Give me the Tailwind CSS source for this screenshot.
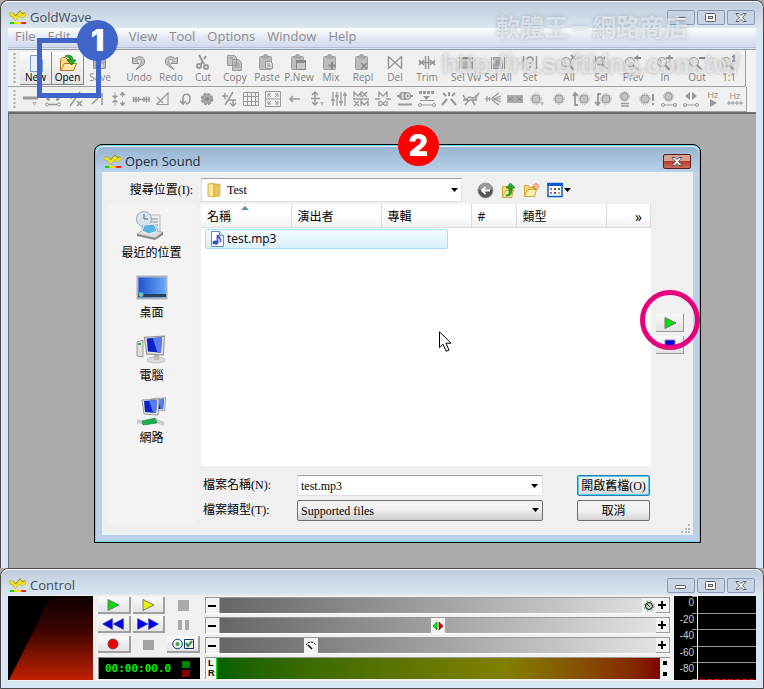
<!DOCTYPE html>
<html lang="zh-Hant">
<head>
<meta charset="utf-8">
<title>GoldWave</title>
<script src="https://cdn.jsdelivr.net/npm/@tailwindcss/browser@4"></script>
</head>
<body class="font-['Open_Sans','Noto_Sans_CJK_TC',sans-serif] text-xs">
<svg class="hidden" aria-hidden="true">
  <symbol id="logo" viewBox="0 0 17 15"><path d="M.500 4.500h3l3 3.500 4.500-5 2.500 3 3-2.500" fill="none" stroke="#9a8c20" stroke-width="3.600"/><path d="M.500 4.500h3l3 4 4.500-5 2.500 3 3-2.500" fill="none" stroke="#f2e21c" stroke-width="2.600"/><path d="M1 13h5" stroke="#0d0" stroke-width="2"/><path d="M5 13h8" stroke="#fd0" stroke-width="2"/><path d="M12 13h5" stroke="#e22" stroke-width="2"/></symbol>
  <symbol id="mag" viewBox="0 0 18 16"><circle cx="6" cy="7" r="4.500" fill="#eee" stroke="#999"/><path d="M9 10l5 5M4 6l1-1" stroke="#999" stroke-width="2"/></symbol>
  <symbol id="clip" viewBox="0 0 16 16"><rect x="1.500" y="2.500" width="12" height="13" rx="1" fill="#bdbdbd" stroke="#a0a0a0"/><path d="M4 2h2V.5h3V2h2v2H4z" fill="#aaa" stroke="#999" stroke-width=".6"/></symbol>
  <symbol id="knob" viewBox="0 0 12 12"><circle cx="6" cy="6" r="4" fill="#c4c4c4" stroke="#999" stroke-width="1.200"/><circle cx="6" cy="6" r="5.400" fill="none" stroke="#999" stroke-dasharray="1 1.400"/></symbol>
  <symbol id="min" viewBox="0 0 26 13"><rect x="7.500" y="6.500" width="10" height="3" rx="1" fill="#fff" stroke="#555a6c"/></symbol>
  <symbol id="max" viewBox="0 0 26 13"><rect x="7.500" y="2.500" width="10" height="8" rx="1" fill="#fff" stroke="#555a6c"/><rect x="10.500" y="5.500" width="4" height="2" fill="#cfdbe8" stroke="#555a6c"/></symbol>
  <symbol id="close" viewBox="0 0 26 13"><path d="M8 2.500h3l2 2 2-2h3l-3.500 4 3.500 4h-3l-2-2-2 2H8l3.500-4z" fill="#fff" stroke="#555a6c"/></symbol>
  <symbol id="down" viewBox="0 0 7 4"><path d="M0 0h7L3.500 4z" fill="#000"/></symbol>
  <symbol id="pc" viewBox="0 0 22 22"><path d="M2 2l17-1-1 16-14-1z" fill="#e4e4e4" stroke="#999"/><path d="M4 3l13-1-1 13-11-1z" fill="#0824c8"/><path d="M9 2.600l4 12 3 .4 1-13z" fill="#5a7cec"/></symbol>
</svg>

<div class="relative flex min-h-screen flex-col overflow-hidden bg-[#ababab]">

  <!-- Main window -->
  <main class="flex flex-1 flex-col rounded-t-lg border border-b-0 border-[#4c4a4e] bg-[#d9e6f3] px-[7px]">
    <header class="-mx-[7px] flex h-[27px] items-start rounded-t-lg border-t border-white/70 bg-linear-to-b from-[#bfccda] to-[#dbe6f2] px-2">
      <svg class="mt-2 h-4 w-[21px]"><use href="#logo" width="17" height="15"/></svg>
      <h1 class="mt-[5px] flex-1 text-[13px] leading-5 text-[#454c58]">GoldWave</h1>
      <div class="mt-2 flex gap-0.5 *:h-[15px] *:w-7 *:rounded-xs *:border *:border-[#8c9ab0] *:bg-[#c8d4e4]">
        <button aria-label="Minimize"><svg class="size-full"><use href="#min"/></svg></button>
        <button aria-label="Maximize"><svg class="size-full"><use href="#max"/></svg></button>
        <button aria-label="Close"><svg class="size-full"><use href="#close"/></svg></button>
      </div>
    </header>
    <nav class="flex h-5 items-start gap-3 border-b border-[#b8bcd0] bg-linear-to-b from-white via-[#e4e8f4] to-[#d3d9ee] pl-[7px] text-[13px] leading-4 text-[#8c8c8c] *:whitespace-nowrap">
      <button>File</button><button>Edit</button><button>Effect</button><button>View</button><button>Tool</button><button>Options</button><button>Window</button><button>Help</button>
    </nav>

    <!-- Command toolbar -->
    <div class="mt-px border-t border-[#999] bg-[#f3f3f3]">
      <div class="flex h-[37px] w-[738px] items-center gap-[7px] overflow-hidden border-r border-b border-[#a0a0a0] bg-[#f0f0f0] pl-[5px]">
        <svg class="-mr-[7px] h-8 w-[7px] shrink-0"><path d="M1.500 1v30" stroke="#aaa" stroke-width="2" stroke-dasharray="2 2"/></svg>
        <div class="flex text-[10px] leading-[10px] text-black *:flex *:h-[33px] *:w-8 *:flex-col *:items-center *:pt-0.5 *:whitespace-nowrap">
          <button class="border-r border-b border-[#888] bg-linear-to-b from-[#fafafa] to-[#e2e2e2]"><svg class="size-[18px] shrink-0"><path d="M3.500 1.500h8l4 4v12h-12z" fill="#e6efff" stroke="#7f9fd2"/><path d="M11.500 1.500v4h4" fill="#fff" stroke="#7f9fd2"/></svg>New</button>
          <button class="border-r border-b border-[#888] bg-linear-to-b from-[#fafafa] to-[#e2e2e2]"><svg class="size-[18px] shrink-0"><path d="M1.500 16.500v-11l2-2h3l2 2h5v3" fill="#fbd98a" stroke="#b5791e"/><path d="M1.500 16.500l4-7h12l-3 7z" fill="#ffe9a8" stroke="#b5791e"/><path d="M6 2c5-2 8 0 8 4h3l-4.500 5L8 6h3c0-2-2-3-5-4z" fill="#23b023" stroke="#0a6e0a" stroke-width=".7"/></svg>Open</button>
          <button class="text-[#888]"><svg class="size-[18px] shrink-0"><path d="M2.500 2.500h12v12h-12z" fill="#b0b0b0" stroke="#999"/><path d="M5 3h7v4H5zM5 10h7v4H5z" fill="#ddd"/></svg>Save</button>
        </div>
        <div class="flex text-[10px] leading-[10px] text-[#808080] *:flex *:h-[33px] *:w-8 *:flex-col *:items-center *:pt-0.5 *:whitespace-nowrap">
          <button><svg class="size-[18px] shrink-0"><path d="M2.500 3v6.500H9L6.500 7C9 4 13 6 10.500 10L6 15.500 13 11c5-5-2-12-8.500-6z" fill="#c4c4c4" stroke="#8c8c8c"/></svg>Undo</button>
          <button><svg class="size-[18px] shrink-0"><path d="M15.500 3v6.500H9L11.500 7C9 4 5 6 7.500 10l4.500 5.500L5 11C0 6 7-1 13.500 5z" fill="#c4c4c4" stroke="#8c8c8c"/></svg>Redo</button>
          <button><svg class="size-[18px] shrink-0" fill="none" stroke="#999" stroke-width="2"><path d="M5 1l5 9M10 5l2-3M9 7L6 11"/><circle cx="5" cy="12" r="2"/><circle cx="12" cy="13" r="2"/></svg>Cut</button>
          <button><svg class="size-[18px] shrink-0" fill="#c2c2c2" stroke="#999"><path d="M1.500 1.500h7l2 2v8h-9zM6.500 5.500h6l3 3v8h-9z"/><path d="M8 9h5M8 11h6M8 13h6M3 4h4"/></svg>Copy</button>
          <button><svg class="size-[18px] shrink-0"><use href="#clip" width="16" height="16"/><path d="M7.500 7.500h5l2 2v5h-7z" fill="#ddd" stroke="#999"/><path d="M9 10h3M9 12h4" stroke="#999"/></svg>Paste</button>
          <button><svg class="size-[18px] shrink-0"><use href="#clip" width="16" height="16"/><path d="M6.500 6.500h9v9h-9z" fill="#c8c8c8" stroke="#888"/><path d="M6 7.500h10" stroke="#888" stroke-width="3"/></svg>P.New</button>
          <button><svg class="size-[18px] shrink-0"><use href="#clip" width="16" height="16"/><path d="M10 8v7M6.500 11.500h7" stroke="#888" stroke-width="2"/></svg>Mix</button>
          <button><svg class="size-[18px] shrink-0"><use href="#clip" width="16" height="16"/><path d="M7 9l6 6M13 9l-6 6" stroke="#888" stroke-width="1.600"/></svg>Repl</button>
          <button><svg class="size-[18px] shrink-0" fill="none" stroke="#999" stroke-width="1.500"><path d="M2.500 2v13M15.500 2v13M3 3l12 11M15 3L3 14"/></svg>Del</button>
          <button><svg class="size-[18px] shrink-0" fill="none" stroke="#999" stroke-width="1.500"><path d="M7.500 2v13M10.500 2v13M1 6l5 5M6 6l-5 5M12 6l5 5M17 6l-5 5M1 8.500h16"/></svg>Trim</button>
        </div>
        <div class="flex text-[10px] leading-[10px] text-[#808080] *:flex *:h-[33px] *:w-8 *:flex-col *:items-center *:pt-0.5 *:whitespace-nowrap">
          <button><svg class="size-[18px] shrink-0"><path d="M2.500 3v12M15.500 3v12" stroke="#999"/><path d="M4 4h10v10H4z" fill="#bbb" stroke="#999"/><path d="M4 4.500h10" stroke="#777" stroke-width="2"/></svg>Sel Vw</button>
          <button><svg class="size-[18px] shrink-0"><path d="M2.500 3v12M15.500 3v12" stroke="#999"/><path d="M4.500 3.500h6l3 3v8h-9z" fill="#bbb" stroke="#999"/><path d="M6 7h5M6 9h6M6 11h6" stroke="#888"/></svg>Sel All</button>
          <button><svg class="size-[18px] shrink-0" fill="none" stroke="#999" stroke-width="1.500"><path d="M2.500 2v13M15.500 2v13M6 6c0-4 6-4 6 0 0 2-3 2-3 4M9 12v2"/></svg>Set</button>
        </div>
        <div class="flex text-[10px] leading-[10px] text-[#808080] *:flex *:h-[33px] *:w-8 *:flex-col *:items-center *:pt-0.5 *:whitespace-nowrap">
          <button><svg class="size-[18px] shrink-0"><use href="#mag"/><path d="M11 1l5 5M16 1l-5 5" stroke="#888" stroke-width="1.500"/></svg>All</button>
          <button><svg class="size-[18px] shrink-0"><path d="M3.500 2v12M12.500 2v12" stroke="#999"/><rect x="5" y="3" width="6" height="8" rx="2" fill="#ddd" stroke="#999"/><path d="M10 10l5 5" stroke="#999" stroke-width="2"/></svg>Sel</button>
          <button><svg class="size-[18px] shrink-0"><use href="#mag"/><path d="M17 4h-5" stroke="#888" stroke-width="2"/><path d="M10 4l4-3v6z" fill="#888"/></svg>Prev</button>
          <button><svg class="size-[18px] shrink-0"><use href="#mag"/><path d="M10 4h7M13.500 1v7" stroke="#999" stroke-width="2"/></svg>In</button>
          <button><svg class="size-[18px] shrink-0"><use href="#mag"/><path d="M11 4h6" stroke="#888" stroke-width="2"/></svg>Out</button>
          <button><svg class="size-[18px] shrink-0"><use href="#mag"/><path d="M12 3l2-1.500V7M12 7h4" fill="none" stroke="#888" stroke-width="1.300"/></svg>1:1</button>
        </div>
      </div>

      <!-- Effects toolbar -->
      <div class="flex h-[25px] w-[739px] items-center overflow-hidden border-r border-b border-[#a0a0a0] bg-[#f0f0f0] pl-[5px] *:shrink-0">
        <svg class="h-5 w-[7px]"><path d="M1.500 1v18" stroke="#aaa" stroke-width="2" stroke-dasharray="2 2"/></svg>
        <div class="flex text-[#999] *:flex *:h-5 *:w-[22px] *:items-center *:justify-center">
          <button aria-label="Censor"><svg width="16" height="16" fill="none" stroke="currentColor"><path d="M0 7h15" stroke-width="3"/><path d="M9 11h5l-2.500 4z" fill="#bbb" stroke="none"/></svg></button>
          <button aria-label="Stereo"><svg width="16" height="16" fill="none" stroke="currentColor"><path d="M1 13.500h14M4 2v8M12 2v8M1 6h14M2 4l-1 2 2 3M14 4l1 2-2 3" stroke-width="1.500"/><circle cx="2" cy="13.500" r="1.500" fill="#f0f0f0"/><circle cx="14" cy="13.500" r="1.500" fill="#f0f0f0"/></svg></button>
          <button aria-label="Expression"><svg width="16" height="16" fill="none" stroke="currentColor" stroke-width="1.500"><path d="M1 5h6M4 2v6M13 1L3 15M10 10l5 5M15 10l-5 5M10 4h5"/></svg></button>
          <button aria-label="Fade"><svg width="16" height="16" fill="none" stroke="currentColor" stroke-width="1.500"><path d="M3 13L13 3v11M8 3h5M3 4l4 3"/></svg></button>
          <button aria-label="Compressor"><svg width="16" height="16" fill="#999" stroke="currentColor"><path d="M4 1v5M4 10v5M11.500 1v5M11.500 10v5M1.500 5h5L4 7.500zM1.500 11h5L4 8.500zM9 4h5l-2.500-3zM9 12h5l-2.500 3z" stroke-width=".8"/></svg></button>
          <button aria-label="Delay"><svg width="18" height="16"><path d="M1.500 6v5M4 5.500v6M6.500 6v5M12 6v5M14.500 5.500v6M17 6v5M1 8.500h16" stroke="currentColor" stroke-width="1.500"/></svg></button>
          <button aria-label="Doppler"><svg width="16" height="16" fill="none" stroke="currentColor" stroke-width="1.200"><path d="M2 13L13 2v11.500H2zM2 6l6 6"/></svg></button>
          <button aria-label="Echo"><svg width="16" height="16" fill="none" stroke="currentColor" stroke-width="1.600"><path d="M6 13V7c0-5 7-5 7 0 0 4-1 5-4 6M3 10l3 3 3-3"/></svg></button>
          <button aria-label="Filter"><svg width="16" height="16"><circle cx="8" cy="8" r="5" fill="#a8a8a8" stroke="#999" stroke-width="2.500" stroke-dasharray="2.800 1.100"/><circle cx="8" cy="8" r="2" fill="#888"/></svg></button>
          <button aria-label="Dynamics"><svg width="16" height="16" fill="none" stroke="currentColor" stroke-width="1.500"><path d="M1 5h6M4 2v6M12 1L4 14M7 9h8M9 12l3 3 3-3M12 9v5"/></svg></button>
          <button aria-label="Grid"><svg width="18" height="16" fill="none" stroke="currentColor"><path d="M1.500 1.500h15v13h-15zM1 5.500h16M1 10.500h16M5.500 2v13M9.500 2v13M13.500 2v13"/></svg></button>
          <button aria-label="Flanger"><svg width="16" height="16" fill="none" stroke="currentColor"><path d="M.5.500h15v15H.5zM3 6V3h3M10 3h3v3M13 10v3h-3M6 13H3v-3M3 3l3 3M13 3l-3 3M3 13l3-3M13 13l-3-3M1 8h14"/></svg></button>
          <button aria-label="Reverse"><svg width="14" height="16" fill="none" stroke="currentColor" stroke-width="1.600"><path d="M2 8h10M5 5L2 8l3 3"/></svg></button>
          <button aria-label="Invert"><svg width="16" height="16" fill="none" stroke="currentColor" stroke-width="1.500"><path d="M6 1v13M3 4l3-3 3 3M3 11l3 3 3-3M2 7.500h9"/><path d="M11 11h4l-2 4z" fill="#bbb" stroke="none"/></svg></button>
          <button aria-label="Equalizer"><svg width="16" height="16" fill="none" stroke="currentColor" stroke-width="1.300"><path d="M2 1v14M6 1v14M10 1v14M14 1v14M0 9h4M4 5h4M8 11h4M12 4h4"/></svg></button>
          <button aria-label="Match volume"><svg width="16" height="16" fill="none" stroke="currentColor" stroke-width="1.300"><path d="M1 6V1l4 4 3-4v5M9 1l5 5M14 1L9 6M0 8h16M1 10l5 5M6 10l-5 5M8 15v-5l3 4 4-4v5"/></svg></button>
          <button aria-label="Maximize volume"><svg width="16" height="16" fill="none" stroke="currentColor" stroke-width="1.300"><path d="M4 6V1l4 4 4-4v5M0 8h5M11 8h5M5 10l6 5M11 10l-6 5M4 10v5M12 10v5"/></svg></button>
          <button aria-label="EQ"><svg width="18" height="16"><rect x="3" y="1" width="12" height="8" rx="4" fill="currentColor"/><path d="M1 5h3M14 5h3M2 13.500h14" stroke="#999" stroke-width="2"/><path d="M8 3H6v4h2M6 5h2M10 3h3v4h-3z" fill="none" stroke="#eee"/></svg></button>
          <button aria-label="Shape volume"><svg width="18" height="16"><path d="M1 1.500h16" stroke="#999" stroke-width="3" stroke-dasharray="3 1"/><path d="M5 5h7L8.500 9z" fill="#999"/><path d="M2 9.500h14M2 14h14" stroke="#999"/><circle cx="2" cy="14" r="1.500" fill="#eee" stroke="#999"/><circle cx="16" cy="14" r="1.500" fill="#eee" stroke="#999"/></svg></button>
          <button aria-label="Pop and click"><svg width="16" height="16" stroke="currentColor" stroke-width="2"><path d="M6 8l-5 6M10 8l5 6M8 5V1M5 5L2 2M11 5l3-3"/></svg></button>
          <button aria-label="Noise reduction"><svg width="18" height="16" stroke="currentColor" stroke-width="1.500" fill="none"><path d="M1 4l3 5 3-3 4 1 3-1 3-4M1 9h5M14 4v6M3 14l4-5M13 14l-3-5M7 9h8"/></svg></button>
          <button aria-label="Silence"><svg width="18" height="16" stroke="currentColor" stroke-width="1.200"><path d="M1 8h16M8 7l7-5M8 9l7 5M9 8l8-3M9 8l8 3M3 5v6M5.500 6v4"/></svg></button>
          <button aria-label="Smoother"><svg width="18" height="16"><path d="M1 4h16v8H1z" fill="#aaa"/><path d="M2 6l5 4M7 6l-5 4M11 6l5 4M16 6l-5 4" stroke="#888"/></svg></button>
          <button aria-label="Volume menu"><svg width="16" height="16"><use href="#knob" x="1" y="2" width="12" height="12"/><path d="M11 11h4l-2 4z" fill="#bbb"/></svg></button>
          <button aria-label="Volume"><svg width="16" height="16"><use href="#knob" x="2" y="2" width="12" height="12"/></svg></button>
          <button aria-label="Fade in"><svg width="18" height="16"><use href="#knob" x="6" y="2" width="12" height="12"/><path d="M6 14H3V3M1 5l2-3 3 3" stroke="#999" stroke-width="1.800" fill="none"/></svg></button>
          <button aria-label="Fade out"><svg width="18" height="16"><use href="#knob" x="6" y="2" width="12" height="12"/><path d="M7 3H4v11M1 11l3 3 2-3" stroke="#999" stroke-width="1.800" fill="none"/></svg></button>
          <button aria-label="Match"><svg width="16" height="16"><use href="#knob" x="2" y="0" width="11" height="11"/><path d="M4 12.500h8M4 15h8" stroke="#999" stroke-width="1.500"/></svg></button>
          <button aria-label="Boost"><svg width="18" height="16"><use href="#knob" x="1" y="2" width="12" height="12"/><path d="M15 3v7M15 12v2" stroke="#999" stroke-width="2"/></svg></button>
          <button aria-label="Envelope"><svg width="18" height="16"><use href="#knob" x="3" y="0" width="11" height="11"/><path d="M3 14h12" stroke="#999"/><circle cx="3" cy="14" r="1.500" fill="#eee" stroke="#999"/><circle cx="15" cy="14" r="1.500" fill="#eee" stroke="#999"/></svg></button>
          <button aria-label="Pan"><svg width="18" height="16"><path d="M8 1v8L3 5zM10 1v8l5-4z" fill="#999"/><path d="M3 14h12" stroke="#999"/><circle cx="3" cy="14" r="1.500" fill="#eee" stroke="#999"/><circle cx="15" cy="14" r="1.500" fill="#eee" stroke="#999"/></svg></button>
          <button aria-label="Playback rate" class="flex-col font-['Liberation_Sans',sans-serif] text-[9px] leading-2">Hz<svg width="10" height="8"><path d="M2 0v8l7-4z" fill="#999"/></svg></button>
          <button aria-label="Resample" class="flex-col font-['Liberation_Sans',sans-serif] text-[9px] leading-2">Hz<svg width="16" height="6"><path d="M0 3h16M2 1v4M6 1v4M10 1v4M14 1v4" stroke="#999"/></svg></button>
        </div>
      </div>
    </div>
    <div class="flex-1 border-t-2 border-l border-[#6c6c6c] bg-[#ababab]"></div>
  </main>

  <!-- Control window -->
  <section class="rounded-t-lg border border-[#4c4a4e] bg-[#d9e6f3] px-[7px] pb-[7px]">
    <header class="-mx-[7px] flex h-[26px] items-start rounded-t-lg border-t border-white/70 bg-linear-to-b from-[#bfccda] to-[#dbe6f2] px-2">
      <svg class="mt-2 h-4 w-[21px]"><use href="#logo" width="17" height="15"/></svg>
      <h2 class="mt-[5px] flex-1 text-[13px] leading-5 text-[#454c58]">Control</h2>
      <div class="mt-2 flex gap-0.5 *:h-[15px] *:w-7 *:rounded-xs *:border *:border-[#8c9ab0] *:bg-[#c8d4e4]">
        <button aria-label="Minimize"><svg class="size-full"><use href="#min"/></svg></button>
        <button aria-label="Maximize"><svg class="size-full"><use href="#max"/></svg></button>
        <button aria-label="Close"><svg class="size-full"><use href="#close"/></svg></button>
      </div>
    </header>
    <div class="flex h-[86px] bg-[#f0f0f0]">
      <svg class="mt-px h-[84px] w-[85px] shrink-0" viewBox="0 0 85 84"><defs><linearGradient id="heat" x2="0" y2="1"><stop offset="0" stop-color="#100000"/><stop offset=".4" stop-color="#3a0500"/><stop offset="1" stop-color="#c02000"/></linearGradient></defs><path d="M0 0h85v84H0z"/><path d="M43 0h42v84H1z" fill="url(#heat)"/></svg>
      <div class="ml-[5px] w-[102px] shrink-0 pt-0.5">
        <div class="grid grid-cols-3 gap-x-0.5 gap-y-0.5 *:flex *:h-[17px] *:items-center *:justify-center">
          <button aria-label="Play" class="border-r-2 border-b-2 border-[#a0a0a0] bg-linear-to-b from-[#fafafa] to-[#e4e4e4]"><svg width="14" height="12"><path d="M2 .5v11L13 6z" fill="#0d0" stroke="#777"/></svg></button>
          <button aria-label="Play selection" class="border-r-2 border-b-2 border-[#a0a0a0] bg-linear-to-b from-[#fafafa] to-[#e4e4e4]"><svg width="14" height="12"><path d="M2 .5v11L13 6z" fill="#ee0" stroke="#777"/></svg></button>
          <button aria-label="Stop"><svg width="12" height="12"><path d="M0 0h11v11H0z" fill="#aaa"/></svg></button>
          <button aria-label="Rewind" class="border-r-2 border-b-2 border-[#a0a0a0] bg-linear-to-b from-[#fafafa] to-[#e4e4e4]"><svg width="22" height="12"><path d="M10.500.5v11L.5 6zM21.500.5v11L11 6z" fill="#00e" stroke="#559" stroke-width=".6"/></svg></button>
          <button aria-label="Fast forward" class="border-r-2 border-b-2 border-[#a0a0a0] bg-linear-to-b from-[#fafafa] to-[#e4e4e4]"><svg width="22" height="12"><path d="M.5.5v11L11 6zM11.500.5v11L21.500 6z" fill="#00e" stroke="#559" stroke-width=".6"/></svg></button>
          <button aria-label="Pause"><svg width="12" height="12"><path d="M0 1h4v10H0zM7 1h4v10H7z" fill="#aaa"/></svg></button>
        </div>
        <div class="mt-[3px] grid grid-cols-3 gap-x-0.5 *:flex *:h-[17px] *:items-center *:justify-center">
          <button aria-label="Record" class="border-r-2 border-b-2 border-[#a0a0a0] bg-linear-to-b from-[#fafafa] to-[#e4e4e4]"><svg width="12" height="12"><circle cx="6" cy="6" r="5" fill="#e00" stroke="#844"/></svg></button>
          <button aria-label="Stop recording"><svg width="12" height="12"><path d="M0 1h11v10H0z" fill="#a4a4a4"/></svg></button>
          <button aria-label="Properties" class="border-r-2 border-b-2 border-[#a0a0a0] bg-linear-to-b from-[#fafafa] to-[#e4e4e4]"><svg width="22" height="12" fill="none" stroke="#137"><circle cx="5.500" cy="6" r="4.800"/><circle cx="5.500" cy="6" r="1.500" fill="#2a3" stroke="#2a3"/><path d="M12.500 1.500h9v9h-9z"/><path d="M14 5l2 3 4-5" stroke="#283" stroke-width="2"/></svg></button>
        </div>
        <div class="mt-1 flex h-[22px] items-center justify-between border-t border-l border-[#888] bg-black pr-2.5 pl-1.5 font-['DejaVu_Sans_Mono',monospace] text-[11px] leading-5 font-bold text-[#00f000]">
          <output>00:00:00.0</output>
          <svg class="shrink-0" width="8" height="16"><path d="M0 0h8v7H0z" fill="#008000"/><path d="M0 9h8v7H0z" fill="#800000"/></svg>
        </div>
      </div>
      <div class="ml-[5px] flex min-w-0 flex-1 flex-col gap-[3px] pt-0.5">
        <div class="flex h-[17px] items-center border-t border-b border-l border-[#999] border-b-white bg-[#f0f0f0]">
          <button aria-label="Volume down" class="h-full w-3.5 border-r border-[#aaa] bg-[#f2f2f2]"><svg width="12" height="14"><path d="M2 7h8" stroke="#000" stroke-width="2"/></svg></button>
          <div class="flex h-full flex-1 justify-end bg-linear-to-r from-[#666] to-[#e2e2e2]"><button aria-label="Volume" class="w-3.5 bg-[#f2f2f2]"><svg width="14" height="14"><circle cx="7" cy="7" r="5" fill="none" stroke="#2b2" stroke-dasharray="2 2"/><circle cx="7" cy="7" r="3.500" fill="#ccc" stroke="#000"/><path d="M5 5l3 3" stroke="#000"/></svg></button></div>
          <button aria-label="Volume up" class="h-full w-3.5 border-r border-b border-[#999] bg-[#f2f2f2]"><svg width="12" height="14"><path d="M2 7h8M6 3v8" stroke="#000" stroke-width="2"/></svg></button>
        </div>
        <div class="flex h-[17px] items-center border-t border-b border-l border-[#999] border-b-white bg-[#f0f0f0]">
          <button aria-label="Balance left" class="h-full w-3.5 border-r border-[#aaa] bg-[#f2f2f2]"><svg width="12" height="14"><path d="M2 7h8" stroke="#000" stroke-width="2"/></svg></button>
          <div class="flex h-full flex-1 justify-center bg-linear-to-r from-[#666] to-[#e2e2e2]"><button aria-label="Balance" class="w-3.5 bg-[#f2f2f2]"><svg width="14" height="14"><path d="M6 3v8L2 7z" fill="#0e0" stroke="#060" stroke-width=".6"/><path d="M8 3v8l4-4z" fill="#e00" stroke="#600" stroke-width=".6"/></svg></button></div>
          <button aria-label="Balance right" class="h-full w-3.5 border-r border-b border-[#999] bg-[#f2f2f2]"><svg width="12" height="14"><path d="M2 7h8M6 3v8" stroke="#000" stroke-width="2"/></svg></button>
        </div>
        <div class="flex h-[17px] items-center border-t border-b border-l border-[#999] border-b-white bg-[#f0f0f0]">
          <button aria-label="Slower" class="h-full w-3.5 border-r border-[#aaa] bg-[#f2f2f2]"><svg width="12" height="14"><path d="M2 7h8" stroke="#000" stroke-width="2"/></svg></button>
          <div class="flex h-full flex-1 bg-linear-to-r from-[#666] to-[#e2e2e2] pl-[18%]"><button aria-label="Speed" class="w-3.5 bg-[#f2f2f2]"><svg width="14" height="14" fill="none" stroke="#000"><path d="M2 6c2-4 8-4 10 0" stroke-dasharray="2 1"/><path d="M4 6l4 4" stroke-width="1.500"/></svg></button></div>
          <button aria-label="Faster" class="h-full w-3.5 border-r border-b border-[#999] bg-[#f2f2f2]"><svg width="12" height="14"><path d="M2 7h8M6 3v8" stroke="#000" stroke-width="2"/></svg></button>
        </div>
        <div class="flex h-[22px] border-t border-l border-[#999] bg-[#f4f4f4]">
          <div class="w-2.5 pl-0.5 font-['Liberation_Sans',sans-serif] text-[9px] leading-[10px] font-bold"><div>L</div><div>R</div></div>
          <div class="flex-1 border-l border-[#0e0] bg-linear-to-r from-[#006000] via-[#808000] via-65% to-[#800000]"></div>
          <div class="flex w-2.5 flex-col items-center justify-around *:size-1 *:bg-black"><i></i><i></i></div>
        </div>
      </div>
      <svg class="mt-px ml-1 h-[84px] w-[82px] shrink-0 font-['Liberation_Sans',sans-serif] text-[10px]" viewBox="0 0 82 84" fill="#ccc" text-anchor="end"><path d="M0 0h82v84H0z" fill="#000"/><path d="M18 .5h5M18 17.500h64M18 33.500h64M18 50.500h64M18 66.500h64M18 83.500h5" stroke="#999"/><path d="M23.500 0v84" stroke="#fff"/><path d="M26 83.500h56" stroke="#f00" stroke-dasharray="5 2"/><text x="20" y="10">0</text><text x="20" y="27">-20</text><text x="20" y="43">-40</text><text x="20" y="60">-60</text><text x="20" y="76">-80</text></svg>
    </div>
  </section>

  <!-- Open Sound dialog -->
  <section role="dialog" aria-label="Open Sound" class="absolute top-[144px] left-[94px] w-[607px] rounded-t-lg border border-black bg-[#bad1ea] px-[7px] pb-[7px] shadow-[inset_0_0_0_1px_#6bd2ec]">
    <header class="-mx-[6px] mt-px flex h-[26px] items-start rounded-t-lg border-t border-white/70 bg-linear-to-b from-[#98b4d2] to-[#b9d1ea] px-2">
      <svg class="mt-[7px] h-4 w-[21px]"><use href="#logo" width="17" height="15"/></svg>
      <h2 class="mt-1 flex-1 text-[13px] leading-5 text-[#1c2b40]">Open Sound</h2>
      <button aria-label="Close" class="mt-[7px] h-[15px] w-7 rounded-xs border border-[#5a1c1c] bg-linear-to-b from-[#d8a090] from-45% via-[#b43c28] via-50% to-[#cc7058]"><svg class="size-full"><use href="#close"/></svg></button>
    </header>
    <form class="flex flex-col bg-[#f0f0f0] px-1.5 pt-1.5 pb-2.5 font-['Liberation_Serif','Noto_Sans_CJK_TC',serif] text-xs text-black" onsubmit="return false">
      <div class="flex h-6 items-center">
        <label for="look" class="w-[93px] shrink-0 pr-2 text-right">搜尋位置(I):</label>
        <div class="relative w-[261px]">
          <select id="look" class="block h-6 w-full appearance-none border border-[#dcdfe8] border-t-[#9a9ea8] bg-white pl-[25px] text-xs"><option>Test</option></select>
          <svg class="pointer-events-none absolute top-1 left-1.5 size-4"><path d="M1 2l6-1v14l-6-1z" fill="#f5dc80" stroke="#d9b84c"/><path d="M7 2h6v12l-6 1z" fill="#e6c45c" stroke="#c9a23c" stroke-width=".6"/><path d="M4.500 3v11" stroke="#fff3b8" stroke-width="2"/></svg>
          <svg class="pointer-events-none absolute top-2.5 right-1 h-1 w-[7px]"><use href="#down"/></svg>
        </div>
        <div class="ml-[15px] flex items-center gap-[7px]">
          <button aria-label="Back"><svg class="block" width="17" height="17"><circle cx="8.500" cy="8.500" r="7.500" fill="#555" stroke="#999"/><path d="M2 7a6.500 6 0 0113 0c-4 2-8 2-13 0z" fill="#999"/><path d="M13 8.500H5M8.500 5L5 8.500l3.500 3.500" fill="none" stroke="#fff" stroke-width="1.800"/></svg></button>
          <button aria-label="Up one level"><svg class="block" width="15" height="17"><path d="M1.500 4.500h4l1 2h5l-1 9h-9z" fill="#f8dc78" stroke="#d0a838"/><path d="M1.500 15.500l3-7h8l-2 7z" fill="#ffeeaa" stroke="#d0a838"/><path d="M5 13c4 0 3-4 3-7H5l4.500-5L14 6h-3c0 5 0 8-6 8z" fill="#2a2" stroke="#071" stroke-width=".6"/></svg></button>
          <button aria-label="New folder"><svg class="block" width="17" height="16"><path d="M1.500 3.500h4l1 2h6l-1 9h-10z" fill="#f8dc78" stroke="#d0a838"/><path d="M1.500 14.500l3-7h9l-2 7z" fill="#ffeeaa" stroke="#d0a838"/><path d="M13 1v7M9.500 4.500h7M10.500 2l5 5M15.500 2l-5 5" stroke="#f06030"/><circle cx="13" cy="4.500" r="1.500" fill="#ffe080"/></svg></button>
          <button aria-label="View menu"><svg class="block" width="25" height="16"><path d="M1 1.500h14v13H1z" fill="#fff" stroke="#0a5ccc" stroke-width="1.500"/><path d="M0 2.500h16" stroke="#0a5ccc" stroke-width="3"/><path d="M3 7h2M3 11h2" stroke="#d64" stroke-width="2"/><path d="M7 7h2M7 11h2" stroke="#44c" stroke-width="2"/><path d="M11 7h2" stroke="#282" stroke-width="2"/><path d="M11 11h2" stroke="#ca2" stroke-width="2"/><path d="M17 6h7l-3.500 4z"/></svg></button>
        </div>
      </div>
      <div class="mt-0.5 flex">
        <nav class="flex w-[87px] shrink-0 flex-col items-center bg-[#f3f3f3] pt-1.5 font-['Noto_Sans_CJK_TC',sans-serif] *:flex *:flex-col *:items-center *:leading-4">
          <button class="h-[62px]"><svg class="mb-0.5 shrink-0" width="32" height="32"><path d="M12 5h13v17H12z" fill="#eee" stroke="#bbb"/><path d="M14 9h9M14 12h9M14 15h9" stroke="#88a"/><circle cx="9" cy="9" r="7.500" fill="#d8e4ea" stroke="#9ab"/><path d="M9 4v5h4" fill="none" stroke="#567"/><path d="M7 15l13-1 4 7-18 1z" fill="#3c9fd8" stroke="#ddd"/><path d="M2 24l6-4 20 2-8 6z" fill="#ddd" stroke="#999" stroke-width=".6"/><path d="M7 21l2-6 10-1 3 7-8 3z" fill="#58b4e0" stroke="#eee"/><path d="M2 24l18 4 8-6v3l-8 5-18-4z" fill="#888"/></svg>最近的位置</button>
          <button class="h-[62px]"><svg class="mb-0.5 shrink-0" width="32" height="30"><defs><linearGradient id="sky"><stop stop-color="#1c50c8"/><stop offset="1" stop-color="#68acf8"/></linearGradient></defs><path d="M1.500 4.500h29v22h-29z" fill="url(#sky)" stroke="#a8b4c0" stroke-width="2"/><path d="M2 22h28v3H2z" fill="#29415f"/><circle cx="5" cy="22.500" r="2.500" fill="#3cc4dc"/><path d="M4 22h2v2H4z" fill="#fa4"/></svg>桌面</button>
          <button class="h-[62px]"><svg class="mb-px shrink-0" width="34" height="32"><path d="M2 8l6-2v17l-6-1z" fill="#ddd" stroke="#999"/><path d="M3 10h3" stroke="#3b3" stroke-width="2"/><ellipse cx="21" cy="26" rx="9" ry="3" fill="#ddd" stroke="#bbb"/><path d="M19 20h5v6h-5z" fill="#bbb"/><use href="#pc" x="7" y="1" width="26" height="26"/></svg>電腦</button>
          <button class="h-[62px]"><svg class="mb-px shrink-0" width="34" height="32"><use href="#pc" x="15" y="1" width="18" height="18"/><use href="#pc" x="5" y="2" width="22" height="22"/><path d="M2 25l8 2 12-2 7 3" fill="none" stroke="#ccc" stroke-width="4"/><path d="M7 25l13-3 2 5-14 2z" fill="#20b050" stroke="#178038" stroke-width=".6"/></svg>網路</button>
        </nav>
        <div class="ml-1.5 flex min-w-0 flex-1 flex-col">
          <div class="flex">
            <div class="h-[262px] w-[450px] bg-white font-['Open_Sans','Noto_Sans_CJK_TC',sans-serif]">
              <table class="w-full table-fixed border-collapse text-left">
                <colgroup><col class="w-[90px]"><col class="w-[90px]"><col class="w-[90px]"><col class="w-[45px]"><col class="w-[90px]"><col></colgroup>
                <thead><tr class="h-[23px] *:border-r *:border-b *:border-[#d8dadd] *:bg-linear-to-b *:from-white *:from-45% *:to-[#f0f1f2] *:pt-1 *:pl-1.5 *:font-normal *:leading-4">
                  <th class="relative border-r-[#9adcf8] from-[#e6f5fc] to-[#d4edf9]">名稱<svg class="absolute top-0.5 left-10" width="8" height="4"><path d="M0 4h8L4 0z" fill="#5a8fb0"/></svg></th><th>演出者</th><th>專輯</th><th>#</th><th>類型</th><th><span class="block pr-2 text-right text-sm leading-4">»</span></th>
                </tr></thead>
                <tbody><tr><td colspan="6" class="p-0 pt-px pl-1"><div class="flex h-5 w-[243px] items-center rounded-xs border border-[#a6dcf5] bg-linear-to-b from-[#f3fafe] to-[#dcf1fc] pl-1"><svg width="17" height="16"><path d="M1.500.5h8l4 4v11h-12z" fill="#fff" stroke="#5c8fd0"/><path d="M9.500.5v4h4" fill="#cde" stroke="#5c8fd0"/><ellipse cx="5.500" cy="11.500" rx="3" ry="2" fill="#35c"/><path d="M7.500 11V4c1 2 4 3 3 7" fill="none" stroke="#35c" stroke-width="1.700"/></svg>test.mp3</div></td></tr></tbody>
              </table>
            </div>
            <div class="flex flex-col gap-1 pt-[110px] pl-[5px] *:flex *:h-[18px] *:w-7 *:items-center *:justify-center *:border-r *:border-b *:border-[#999] *:bg-linear-to-b *:from-[#fafafa] *:to-[#e2e2e2]">
              <button type="button" aria-label="Play sound"><svg width="14" height="12"><path d="M2 .5v11L13 6z" fill="#0d0" stroke="#777"/></svg></button>
              <button type="button" aria-label="Stop sound"><svg width="12" height="12"><path d="M1 1h10v9H1z" fill="#00e" stroke="#888"/></svg></button>
            </div>
          </div>
          <div class="mt-[9px] mb-1 grid grid-cols-[94px_246px_73px] items-center gap-y-1 pl-0.5 *:h-[21px]">
            <label for="fname" class="leading-5">檔案名稱(N):</label>
            <div class="flex border border-[#dcdfe8] border-t-[#9a9ea8] bg-white">
              <input id="fname" value="test.mp3" class="min-w-0 flex-1 pl-[3px] text-xs outline-none">
              <button type="button" aria-label="Recent names" class="flex w-4 items-center justify-center"><svg width="7" height="4"><use href="#down"/></svg></button>
            </div>
            <button class="ml-[34px] w-[73px] rounded-xs border border-[#2a7fae] bg-linear-to-b from-[#f2f2f2] from-50% to-[#d4d6d8] leading-4 whitespace-nowrap shadow-[inset_0_0_0_1px_#52cdf2]">開啟舊檔(O)</button>
            <label for="ftype" class="leading-5">檔案類型(T):</label>
            <div class="relative">
              <select id="ftype" class="block h-[21px] w-full appearance-none rounded-xs border border-[#707070] bg-linear-to-b from-[#f2f2f2] from-40% to-[#cfcfcf] pl-[3px] text-xs"><option>Supported files</option></select>
              <svg class="pointer-events-none absolute top-2 right-1 h-1 w-[7px]"><use href="#down"/></svg>
            </div>
            <button type="button" class="ml-[34px] w-[73px] rounded-xs border border-[#707070] bg-linear-to-b from-[#f2f2f2] from-50% to-[#d4d4d4] leading-4">取消</button>
          </div>
        </div>
      </div>
      <svg class="absolute right-2.5 bottom-2" width="10" height="10"><path d="M8 1h2M5 5h2M8 5h2M1 8h2M5 8h2M8 8h2" stroke="#b8b8b8" stroke-width="2"/></svg>
    </form>
  </section>

  <!-- Watermark and tutorial marks -->
  <div class="pointer-events-none absolute top-[11px] left-[496px] text-2xl leading-8 font-bold whitespace-nowrap text-white/50 [text-shadow:0_0_3px_#8a98a870,0_0_5px_#8a98a850]">軟體王－網路商店</div>
  <div class="pointer-events-none absolute top-[46px] left-[442px] font-['Liberation_Sans',sans-serif] text-[25px] leading-9 font-bold whitespace-nowrap text-white/50 [text-shadow:0_0_3px_#88888870,0_0_5px_#88888850]">http://rc.softking.com.tw/</div>
  <div class="pointer-events-none absolute top-[38px] left-[37px] h-[60px] w-16 border-5 border-[#4065c8]"></div>
  <div class="pointer-events-none absolute top-5 left-[77px] flex size-[41px] items-center justify-center rounded-full bg-[#4065c8] font-['Inter',sans-serif] text-[30px] font-black text-white">1</div>
  <div class="pointer-events-none absolute top-[125px] left-[398px] flex size-[41px] items-center justify-center rounded-full bg-[#fe0000] font-['Inter',sans-serif] text-[30px] font-black text-white">2</div>
  <div class="pointer-events-none absolute top-[290px] left-[640px] size-[60px] rounded-full border-5 border-[#e6007e]"></div>
  <svg class="pointer-events-none absolute top-[331px] left-[439px]" width="13" height="22"><path d="M.5.700v16l3.500-3.500 3 7 3-1-3-7h5z" fill="#fff" stroke="#000"/></svg>
</div>
</body>
</html>
